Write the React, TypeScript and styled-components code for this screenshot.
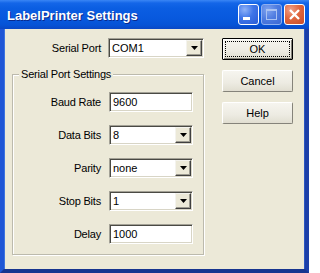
import React from "react";
import styled, { createGlobalStyle, css } from "styled-components";

const GlobalStyle = createGlobalStyle`
  html, body {
    margin: 0;
    padding: 0;
    background: #ffffff;
  }
  body {
    font-family: "Liberation Sans", Arial, sans-serif;
  }
`;

const Window = styled.div`
  width: 309px;
  height: 273px;
  display: flex;
  flex-direction: column;
`;

const TitleBar = styled.div`
  height: 29px;
  flex: none;
  display: flex;
  align-items: center;
  padding: 0 4px 0 7px;
  background: linear-gradient(
    180deg,
    #3a86f5 0px,
    #1466e8 3px,
    #0b5ee2 8px,
    #0859de 18px,
    #0653d6 25px,
    #0a47c4 29px
  );
`;

const Title = styled.div`
  flex: 1;
  color: #ffffff;
  font: bold 13px "Liberation Sans", Arial, sans-serif;
  text-shadow: 1px 1px 0 #0a2a8c;
  padding-top: 1px;
`;

const CaptionButtons = styled.div`
  display: flex;
  gap: 2px;
`;

const CaptionButton = styled.div<{ $kind: "min" | "max" | "close" }>`
  width: 21px;
  height: 21px;
  box-sizing: border-box;
  border: 1px solid #ffffff;
  border-radius: 3px;
  display: flex;
  align-items: center;
  justify-content: center;
  ${(p) =>
    p.$kind === "close"
      ? css`
          background: radial-gradient(circle at 30% 25%, #f0a088 0%, #e0673f 45%, #c84b28 100%);
        `
      : p.$kind === "max"
      ? css`
          border-color: #8fb0f0;
          background: radial-gradient(circle at 30% 25%, #7ea2ee 0%, #4d7be0 50%, #3c68d4 100%);
        `
      : css`
          background: radial-gradient(circle at 30% 25%, #8fb2f8 0%, #3f75e8 45%, #2a5cd6 100%);
        `}
`;

const Frame = styled.div`
  flex: 1;
  display: flex;
  align-items: flex-start;
  padding: 9px 0 0 8px;
  background: #ece9d8;
  border-left: 4px solid #1f56d6;
  border-right: 4px solid #1c3fa8;
  border-bottom: 4px solid #17358f;
  box-shadow: inset 1px 0 0 #3d74e0, inset -1px 0 0 #2b56c0;
`;

const LeftColumn = styled.div`
  width: 192px;
  display: flex;
  flex-direction: column;
`;

const TopRow = styled.div`
  display: grid;
  grid-template-columns: 89px 96px;
  column-gap: 7px;
  align-items: center;
`;

const Label = styled.span`
  font: 11px "Liberation Sans", Arial, sans-serif;
  color: #000000;
  text-align: right;
  letter-spacing: -0.2px;
`;

const GroupBox = styled.fieldset`
  margin: 10px 0 0;
  padding: 11px 0 10px;
  min-inline-size: 0;
  box-sizing: border-box;
  border: 1px solid #bcbaad;
  box-shadow: 1px 1px 0 #ffffff, inset 1px 1px 0 #ffffff;
`;

const Legend = styled.legend`
  margin-left: 6px;
  padding: 0 2px;
  font: 11px "Liberation Sans", Arial, sans-serif;
  line-height: 13px;
  letter-spacing: -0.2px;
  color: #000000;
  background: #ece9d8;
`;

const FieldGrid = styled.div`
  display: grid;
  grid-template-columns: 88px 84px;
  column-gap: 8px;
  row-gap: 13px;
  grid-auto-rows: 20px;
  align-items: center;
`;

const Field = styled.div`
  height: 20px;
  box-sizing: border-box;
  display: flex;
  align-items: stretch;
  padding: 1px 1px 1px 3px;
  background: #ffffff;
  border: 1px solid;
  border-color: #a3a196 #ffffff #ffffff #a3a196;
  box-shadow: inset 1px 1px 0 #4a4a44, inset -1px -1px 0 #d8d5c6;
`;

const FieldText = styled.span`
  flex: 1;
  display: flex;
  align-items: center;
  font: 11px "Liberation Sans", Arial, sans-serif;
  color: #000000;
`;

const DropButton = styled.div`
  width: 16px;
  box-sizing: border-box;
  display: flex;
  align-items: center;
  justify-content: center;
  background: #ece9d8;
  border: 1px solid;
  border-color: #f4f3ee #404040 #404040 #f4f3ee;
  box-shadow: inset -1px -1px 0 #9d9b90;
`;

const RightColumn = styled.div`
  margin-left: 18px;
  display: flex;
  flex-direction: column;
  gap: 10px;
`;

const Button = styled.button<{ $default?: boolean }>`
  width: 71px;
  height: 22px;
  box-sizing: border-box;
  padding: 2px;
  display: flex;
  align-items: stretch;
  font: 11px "Liberation Sans", Arial, sans-serif;
  color: #000000;
  background: linear-gradient(180deg, #f6f5ef 0%, #edebe2 60%, #e1ded1 100%);
  border: 1px solid;
  border-color: #ffffff #85837a #85837a #ffffff;
  border-radius: 2px;
  ${(p) =>
    p.$default &&
    css`
      border-color: #000000;
      border-radius: 1px;
      box-shadow: inset 1px 1px 0 #ffffff, inset -1px -1px 0 #85837a;
    `}
`;

const ButtonFace = styled.span<{ $focus?: boolean }>`
  flex: 1;
  display: flex;
  align-items: center;
  justify-content: center;
  border: 1px dotted ${(p) => (p.$focus ? "#000000" : "transparent")};
`;

const Arrow = () => (
  <svg width="7" height="4" viewBox="0 0 7 4">
    <path d="M0 0h7L3.5 4z" fill="#000" />
  </svg>
);

const Combo: React.FC<{ value: string }> = ({ value }) => (
  <Field>
    <FieldText>{value}</FieldText>
    <DropButton>
      <Arrow />
    </DropButton>
  </Field>
);

const TextBox: React.FC<{ value: string }> = ({ value }) => (
  <Field>
    <FieldText>{value}</FieldText>
  </Field>
);

const portFields = [
  { label: "Baud Rate", value: "9600", combo: false },
  { label: "Data Bits", value: "8", combo: true },
  { label: "Parity", value: "none", combo: true },
  { label: "Stop Bits", value: "1", combo: true },
  { label: "Delay", value: "1000", combo: false },
];

const App: React.FC = () => {
  return (
    <>
      <GlobalStyle />
      <Window>
        <TitleBar>
          <Title>LabelPrinter Settings</Title>
          <CaptionButtons>
            <CaptionButton $kind="min">
              <svg width="19" height="19" viewBox="0 0 19 19">
                <rect x="4" y="12" width="7" height="3" fill="#fff" />
              </svg>
            </CaptionButton>
            <CaptionButton $kind="max">
              <svg width="19" height="19" viewBox="0 0 19 19">
                <rect x="4.5" y="4.5" width="10" height="10" fill="none" stroke="#a9c2f2" />
                <rect x="4" y="4" width="11" height="2" fill="#a9c2f2" />
              </svg>
            </CaptionButton>
            <CaptionButton $kind="close">
              <svg width="19" height="19" viewBox="0 0 19 19">
                <path d="M5 5l9 9M14 5l-9 9" stroke="#fff" strokeWidth="2.4" />
              </svg>
            </CaptionButton>
          </CaptionButtons>
        </TitleBar>
        <Frame>
          <LeftColumn>
            <TopRow>
              <Label>Serial Port</Label>
              <Combo value="COM1" />
            </TopRow>
            <GroupBox>
              <Legend>Serial Port Settings</Legend>
              <FieldGrid>
                {portFields.map((f) => (
                  <React.Fragment key={f.label}>
                    <Label>{f.label}</Label>
                    {f.combo ? <Combo value={f.value} /> : <TextBox value={f.value} />}
                  </React.Fragment>
                ))}
              </FieldGrid>
            </GroupBox>
          </LeftColumn>
          <RightColumn>
            <Button $default>
              <ButtonFace $focus>OK</ButtonFace>
            </Button>
            <Button>
              <ButtonFace>Cancel</ButtonFace>
            </Button>
            <Button>
              <ButtonFace>Help</ButtonFace>
            </Button>
          </RightColumn>
        </Frame>
      </Window>
    </>
  );
};

export default App;
